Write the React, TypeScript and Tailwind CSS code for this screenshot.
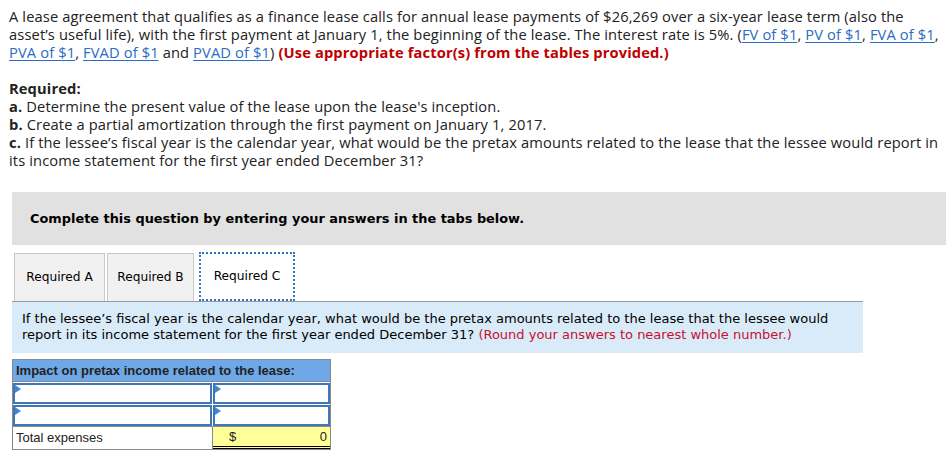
import React from 'react';

const Link = ({ children }: { children: React.ReactNode }) => (
  <a className="text-[#2b6cc4] underline decoration-1 underline-offset-2">{children}</a>
);

const InputCell = ({ wide }: { wide?: boolean }) => (
  <div className={`relative h-[21px] border-2 border-[#3f77b5] bg-white ${wide ? 'w-[200px]' : 'w-[117px]'}`}>
    <span className="absolute left-0 top-0 h-0 w-0 border-y-[4px] border-l-[6px] border-y-transparent border-l-[#3f86d6]" />
  </div>
);

export default function App() {
  return (
    <div className="w-[948px] h-[457px] bg-white text-[#222] overflow-hidden" style={{ fontFamily: '"Open Sans", "Liberation Sans", sans-serif' }}>
      <div className="px-[9px] pt-[7px] text-[14.7px] leading-[18px] tracking-[0.12px] whitespace-nowrap">
        <p>
          A lease agreement that qualifies as a finance lease calls for annual lease payments of $26,269 over a six-year lease term (also the
          <br />
          asset’s useful life), with the first payment at January 1, the beginning of the lease. The interest rate is 5%. (<Link>FV of $1</Link>, <Link>PV of $1</Link>, <Link>FVA of $1</Link>,
          <br />
          <Link>PVA of $1</Link>, <Link>FVAD of $1</Link> and <Link>PVAD of $1</Link>){' '}
          <span className="font-bold text-[#c00000]">(Use appropriate factor(s) from the tables provided.)</span>
        </p>
        <p className="mt-[18px] font-bold">Required:</p>
        <p><b>a.</b> Determine the present value of the lease upon the lease's inception.</p>
        <p><b>b.</b> Create a partial amortization through the first payment on January 1, 2017.</p>
        <p>
          <b>c.</b> If the lessee’s fiscal year is the calendar year, what would be the pretax amounts related to the lease that the lessee would report in
          <br />
          its income statement for the first year ended December 31?
        </p>
      </div>

      <div className="ml-[12px] mr-[2px] mt-[23px] h-[53px] bg-[#e1e1e1] flex items-center pl-[18px]" style={{ fontFamily: '"DejaVu Sans", Verdana, sans-serif' }}>
        <span className="text-[12.9px] font-bold text-black">Complete this question by entering your answers in the tabs below.</span>
      </div>

      <div className="ml-[14px] mt-[7px] flex items-end gap-[5px] text-[12.2px] text-black" style={{ fontFamily: '"DejaVu Sans", Verdana, sans-serif' }}>
        <div className="h-[48px] w-[91px] bg-[#f1f1f1] border border-[#c8c8c8] border-b-0 flex items-center justify-center">Required A</div>
        <div className="h-[48px] w-[87px] bg-[#f1f1f1] border border-[#c8c8c8] border-b-0 flex items-center justify-center -ml-[3px]">Required B</div>
        <div className="h-[49px] w-[96px] bg-white border-2 border-dotted border-[#2f74c8] flex items-center justify-center">Required C</div>
      </div>

      <div className="ml-[12px] w-[851px] h-[52px] bg-[#d9ebf9] border-t border-[#9a9a9a] pl-[10px] pt-[9px] text-[13px] leading-[16px] text-black whitespace-nowrap" style={{ fontFamily: '"DejaVu Sans", Verdana, sans-serif' }}>
        If the lessee’s fiscal year is the calendar year, what would be the pretax amounts related to the lease that the lessee would
        <br />
        report in its income statement for the first year ended December 31? <span className="text-[#c8102e]">(Round your answers to nearest whole number.)</span>
      </div>

      <div className="ml-[12px] mt-[6px] w-[319px] border border-[#8a8a8a]" style={{ fontFamily: '"Liberation Sans", Arial, sans-serif' }}>
        <div className="h-[22px] bg-[#6ea8e8] border-b border-[#8a8a8a] pl-[3px] flex items-center text-[13px] font-bold text-[#222]">
          Impact on pretax income related to the lease:
        </div>
        <div className="flex gap-[1px] pt-[1px]">
          <InputCell wide />
          <InputCell />
        </div>
        <div className="flex gap-[1px] pt-[1px]">
          <InputCell wide />
          <InputCell />
        </div>
        <div className="flex h-[23px] border-t border-[#8a8a8a] text-[13px] text-[#222]">
          <div className="w-[200px] pl-[3px] flex items-center border-r border-[#8a8a8a]">Total expenses</div>
          <div className="w-[117px] bg-[#ffff99] flex items-center justify-between pl-[16px] pr-[3px] border-b-[3px] border-double border-black">
            <span>$</span>
            <span>0</span>
          </div>
        </div>
      </div>
    </div>
  );
}
